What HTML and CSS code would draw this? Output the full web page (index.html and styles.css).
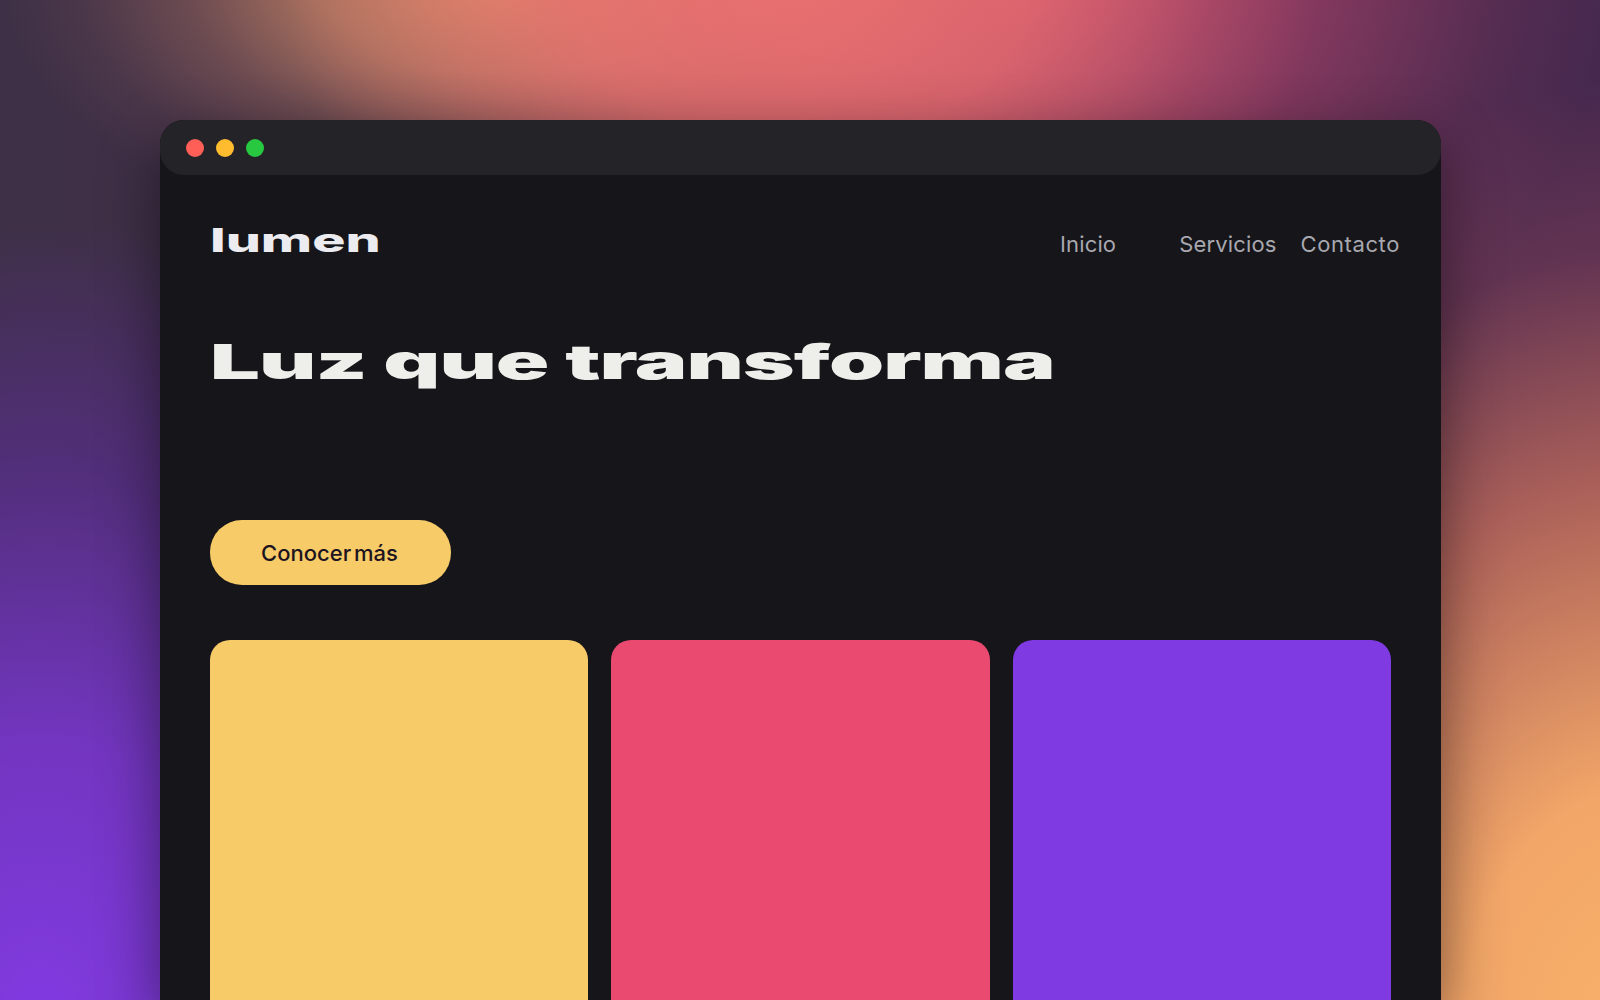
FILE: index.html
```html
<!DOCTYPE html>
<html lang="es">
<head>
<meta charset="utf-8">
<title>lumen</title>
<link rel="stylesheet" href="styles.css">
</head>
<body>
<main class="window">
  <div class="titlebar">
    <span class="dot dot-red"></span>
    <span class="dot dot-yellow"></span>
    <span class="dot dot-green"></span>
  </div>
  <div class="content">
    <header class="site-header">
      <div class="logo">lumen</div>
      <nav class="nav">
        <a class="nav-link nav-first">Inicio</a>
        <a class="nav-link">Servicios</a>
        <a class="nav-link nav-last">Contacto</a>
      </nav>
    </header>
    <h1 class="headline">Luz que transforma</h1>
    <a class="cta">Conocer más</a>
    <section class="cards">
      <div class="card card-yellow"></div>
      <div class="card card-pink"></div>
      <div class="card card-purple"></div>
    </section>
  </div>
</main>
</body>
</html>
```
FILE: styles.css
```css
* { box-sizing: border-box; }
html, body { margin: 0; height: 100%; }
html { overflow: hidden; }
body {
  width: 1600px;
  height: 1000px;
  overflow: hidden;
  font-family: Inter, "Liberation Sans", sans-serif;
  padding: 120px 160px 0;
  background:
    radial-gradient(ellipse 520px 420px at 800px -40px, rgba(236,112,112,1) 0%, rgba(236,112,112,.75) 45%, rgba(236,112,112,.2) 80%, rgba(236,112,112,0) 100%),
    radial-gradient(ellipse 500px 270px at 500px -20px, rgba(214,142,104,1) 0%, rgba(214,142,104,.72) 35%, rgba(214,142,104,.3) 62%, rgba(214,142,104,.08) 84%, rgba(214,142,104,0) 100%),
    radial-gradient(ellipse 560px 540px at 1050px -60px, rgba(190,70,110,.95) 0%, rgba(190,70,110,.5) 50%, rgba(190,70,110,.12) 82%, rgba(190,70,110,0) 100%),
    radial-gradient(ellipse 680px 960px at 1640px 1040px, rgba(248,178,106,1) 0%, rgba(242,166,104,1) 26%, rgba(196,110,92,.8) 58%, rgba(150,72,90,.35) 82%, rgba(130,60,90,0) 100%),
    radial-gradient(ellipse 620px 800px at 40px 1020px, rgba(130,58,226,1) 0%, rgba(120,54,205,.9) 35%, rgba(96,46,160,.6) 68%, rgba(80,44,120,0) 100%),
    linear-gradient(90deg, #3e3046 0%, #46284e 100%);
}
.window {
  width: 1281px;
  height: 880px;
  overflow: hidden;
  background: #15151a;
  border-radius: 24px 24px 0 0;
  box-shadow: 0 20px 60px rgba(0, 0, 0, .45);
}
.titlebar {
  display: flex;
  align-items: center;
  gap: 12px;
  height: 55px;
  padding-left: 26px;
  background: #232328;
  border-radius: 24px;
}
.dot { width: 18px; height: 18px; border-radius: 50%; }
.dot-red { background: #ff5f57; }
.dot-yellow { background: #febc2e; }
.dot-green { background: #28c840; }
.content { padding: 40px 50px 0; }
.site-header {
  display: flex;
  justify-content: space-between;
  align-items: center;
  height: 48px;
  margin-right: -9px;
}
.logo {
  font-weight: 800;
  font-size: 32px;
  line-height: 40px;
  margin-top: 4px;
  color: #ececf0;
  transform: scaleX(1.73);
  transform-origin: left center;
}
.nav { display: flex; gap: 24px; margin-top: 10px; }
.nav-first { margin-right: 39px; }
.nav-link { font-size: 22px; line-height: 28px; letter-spacing: .15px; color: #a8a8af; }
.nav-last { letter-spacing: .6px; }
.headline {
  width: max-content;
  margin: 71px 0 0;
  font-weight: 900;
  font-size: 48px;
  line-height: 56px;
  letter-spacing: -.5px;
  color: #eeeeea;
  white-space: nowrap;
  transform: scaleX(1.84);
  transform-origin: left center;
}
.cta {
  display: flex;
  align-items: center;
  justify-content: center;
  width: 241px;
  height: 65px;
  margin-top: 130px;
  padding-right: 2px;
  border-radius: 32px;
  background: #f6cb68;
  color: #1e1420;
  font-size: 22px;
  font-weight: 500;
  word-spacing: -3px;
}
.cards {
  display: grid;
  grid-template-columns: repeat(3, 1fr);
  gap: 23px;
  margin-top: 55px;
  width: 1181px;
}
.card { height: 500px; border-radius: 20px; }
.card-yellow { background: #f6cb68; }
.card-pink { background: #ea4970; }
.card-purple { background: #803ae2; }
```
